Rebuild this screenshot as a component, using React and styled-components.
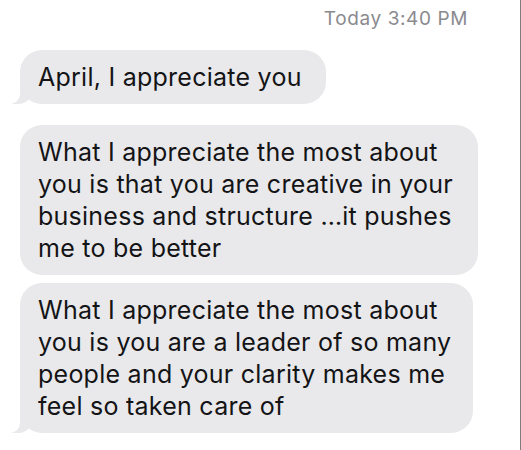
import React from 'react';
import styled, { createGlobalStyle } from 'styled-components';

const GlobalStyle = createGlobalStyle`
  html, body {
    margin: 0;
    padding: 0;
    background: #fff;
  }
  body {
    font-family: Inter, "Liberation Sans", Arial, sans-serif;
    -webkit-font-smoothing: antialiased;
  }
`;

const Thread = styled.div`
  width: 521px;
  height: 450px;
  box-sizing: border-box;
  border-right: 1px solid #7d7d7d;
  padding: 8px 0 0 20px;
  display: flex;
  flex-direction: column;
  align-items: flex-start;
  overflow: hidden;
`;

const Timestamp = styled.div`
  align-self: flex-end;
  margin-right: 52px;
  font-size: 19px;
  line-height: 22px;
  letter-spacing: 0.6px;
  color: #8a8a8e;
  margin-bottom: 20px;
`;

const Bubble = styled.div`
  position: relative;
  box-sizing: border-box;
  width: ${p => p.$width}px;
  margin-top: ${p => p.$gap || 0}px;
  padding: 11px 18px;
  background: #e9e9eb;
  color: #141416;
  border-radius: 22px;
  font-size: 25px;
  line-height: 32px;
  letter-spacing: 0.25px;

  ${p => p.$tail && `
    &::before {
      content: "";
      position: absolute;
      bottom: 0;
      left: -8px;
      width: 22px;
      height: 22px;
      background: #e9e9eb;
      border-bottom-right-radius: 16px;
    }
    &::after {
      content: "";
      position: absolute;
      bottom: 0;
      left: -11px;
      width: 11px;
      height: 22px;
      background: #fff;
      border-bottom-right-radius: 10px;
    }
  `}
`;

const messages = [
  { text: ['April, I appreciate you'], width: 306, tail: true, gap: 0 },
  {
    text: [
      'What I appreciate the most about',
      'you is that you are creative in your',
      'business and structure …it pushes',
      'me to be better',
    ],
    width: 458,
    gap: 21,
  },
  {
    text: [
      'What I appreciate the most about',
      'you is you are a leader of so many',
      'people and your clarity makes me',
      'feel so taken care of',
    ],
    width: 453,
    tail: true,
    gap: 8,
  },
];

const App = () => {
  return (
    <>
      <GlobalStyle />
      <Thread>
        <Timestamp>Today 3:40 PM</Timestamp>
        {messages.map((m, i) => (
          <Bubble key={i} $width={m.width} $tail={m.tail} $gap={m.gap}>
            {m.text.map((line, j) => (
              <React.Fragment key={j}>
                {line}
                {j < m.text.length - 1 && <br />}
              </React.Fragment>
            ))}
          </Bubble>
        ))}
      </Thread>
    </>
  );
};

export default App;
